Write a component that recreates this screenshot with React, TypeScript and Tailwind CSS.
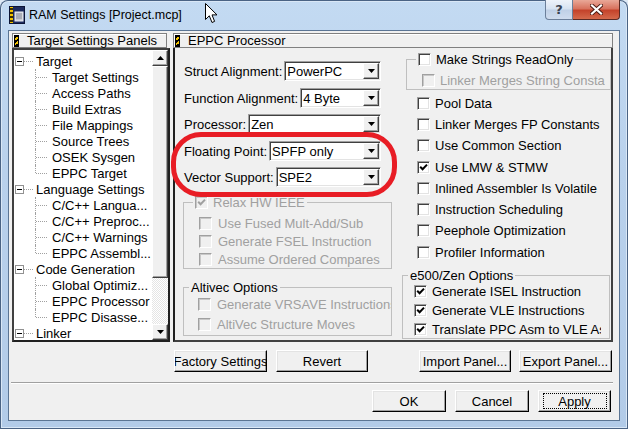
import React from 'react';

const raised =
  'border border-t-white border-l-white border-r-[#404040] border-b-[#404040] shadow-[inset_-1px_-1px_0_#a0a0a0]';
const sunken =
  'border border-t-[#a0a0a0] border-l-[#a0a0a0] border-r-white border-b-white shadow-[inset_1px_1px_0_#404040,inset_-1px_-1px_0_#e3e3e3]';

const Stripe: React.FC = () => (
  <span className="h-[12px] w-[5px] shrink-0 border border-black bg-[repeating-linear-gradient(150deg,#000_0px,#000_2px,#f2c200_2px,#f2c200_4px)]" />
);

const Check: React.FC<{ checked?: boolean; disabled?: boolean }> = ({ checked, disabled }) => (
  <span
    className={`flex h-[13px] w-[13px] shrink-0 items-center justify-center ${
      disabled
        ? 'border border-t-[#a0a0a0] border-l-[#a0a0a0] border-r-white border-b-white bg-[#f0f0f0] shadow-[inset_1px_1px_0_#c8c8c8]'
        : `${sunken} bg-white`
    }`}
  >
    {checked && (
      <svg width="9" height="9" viewBox="0 0 9 9">
        <path d="M1.2 3.8 L3.6 6.3 L8 1.6" fill="none" stroke={disabled ? '#a0a0a0' : '#000'} strokeWidth="2" />
      </svg>
    )}
  </span>
);

const CheckRow: React.FC<{
  label: string;
  checked?: boolean;
  disabled?: boolean;
  pl: string;
  h: string;
  gap?: string;
}> = ({ label, checked, disabled, pl, h, gap = 'gap-[5px]' }) => (
  <div className={`flex ${h} ${pl} ${gap} items-center overflow-hidden whitespace-nowrap`}>
    <Check checked={checked} disabled={disabled} />
    <span className={disabled ? 'text-[#a0a0a0]' : 'text-black'}>{label}</span>
  </div>
);

const Select: React.FC<{ value: string }> = ({ value }) => (
  <div className={`flex h-[20px] min-w-0 flex-1 items-center bg-white p-[1px] ${sunken}`}>
    <span className="min-w-0 flex-1 truncate pl-[1px]">{value}</span>
    <span className={`flex h-[16px] w-[16px] shrink-0 items-center justify-center bg-[#f0f0f0] ${raised}`}>
      <svg width="7" height="4" viewBox="0 0 7 4">
        <path d="M0 0h7L3.5 4z" fill="#000" />
      </svg>
    </span>
  </div>
);

const SelectRow: React.FC<{ label: string; value: string; mt: string }> = ({ label, value, mt }) => (
  <div className={`flex h-[20px] items-center gap-[2px] pl-[1px] pr-[11px] ${mt}`}>
    <span className="whitespace-nowrap">{label}</span>
    <Select value={value} />
  </div>
);

const Btn: React.FC<{ label: string; w: string; ml: string; focus?: boolean }> = ({ label, w, ml, focus }) => (
  <div
    className={`flex h-[22px] ${w} ${ml} shrink-0 items-center justify-center overflow-hidden whitespace-nowrap bg-[#f0f0f0] border border-t-white border-l-white border-r-black border-b-black shadow-[inset_-1px_-1px_0_#a0a0a0,inset_1px_1px_0_#e3e3e3]`}
  >
    {focus ? (
      <span className="flex h-[16px] w-[64px] items-center justify-center border border-dotted border-black">{label}</span>
    ) : (
      label
    )}
  </div>
);

const tree: [string, number, boolean?][] = [
  ['Target', 0],
  ['Target Settings', 1],
  ['Access Paths', 1],
  ['Build Extras', 1],
  ['File Mappings', 1],
  ['Source Trees', 1],
  ['OSEK Sysgen', 1],
  ['EPPC Target', 1, true],
  ['Language Settings', 0],
  ['C/C++ Langua...', 1],
  ['C/C++ Preproc...', 1],
  ['C/C++ Warnings', 1],
  ['EPPC Assembl...', 1, true],
  ['Code Generation', 0],
  ['Global Optimiz...', 1],
  ['EPPC Processor', 1],
  ['EPPC Disasse...', 1, true],
  ['Linker', 0],
];

const TreeRow: React.FC<{ label: string; depth: number; last?: boolean }> = ({ label, depth, last }) =>
  depth === 0 ? (
    <div className="flex h-[16px] shrink-0 items-center whitespace-nowrap">
      <span className="ml-[1px] flex h-[9px] w-[9px] shrink-0 items-center justify-center border border-[#919191] bg-white">
        <span className="h-px w-[5px] bg-black" />
      </span>
      <span className="w-[9px] shrink-0 border-t border-dotted border-[#a0a0a0]" />
      <span className="ml-[3px]">{label}</span>
    </div>
  ) : (
    <div className="flex h-[16px] shrink-0 items-center whitespace-nowrap">
      <span className="w-[21px] shrink-0" />
      <span
        className={`w-0 shrink-0 border-l border-dotted border-[#a0a0a0] ${last ? 'h-[8px] self-start' : 'self-stretch'}`}
      />
      <span className="w-[11px] shrink-0 border-t border-dotted border-[#a0a0a0]" />
      <span className="ml-[5px]">{label}</span>
    </div>
  );

const AppIcon: React.FC = () => (
  <svg width="16" height="18" viewBox="0 0 16 18">
    <rect x="0.5" y="0.5" width="15" height="17" fill="#1c2b5e" stroke="#0b1436" />
    <rect x="1" y="1" width="3" height="16" fill="#f2c200" />
    <path d="M1 3h3M1 7h3M1 11h3M1 15h3" stroke="#000" strokeWidth="1.5" />
    <rect x="6" y="6" width="8" height="9" fill="#c9ccd4" stroke="#eef0f4" />
    <path d="M7 8h6M7 10h6M7 12h6" stroke="#8a8e99" />
  </svg>
);

const App: React.FC = () => {
  return (
    <div className="relative h-[429px] w-[628px] overflow-hidden bg-[#dfe9f5] font-['Liberation_Sans',Arial,sans-serif] text-[13px] leading-[15px] text-black">
      <div className="flex h-full w-full flex-col rounded-t-[8px] bg-[linear-gradient(180deg,#c3daf2_0%,#b9d1ec_40%,#b2cbe8_100%)] shadow-[inset_0_0_0_1px_#4a6384,inset_0_0_0_2px_#d9e7f6]">
        {/* title bar */}
        <div className="flex h-[30px] shrink-0">
          <div className="ml-[9px] mt-[6px]">
            <AppIcon />
          </div>
          <div className="ml-[4px] mt-[7px] font-['Liberation_Sans',Arial,sans-serif] text-[12.5px] leading-[16px] text-black">
            RAM Settings [Project.mcp]
          </div>
          <div className="mr-[8px] ml-auto flex h-[20px]">
            <div className="flex w-[28px] items-center justify-center rounded-bl-[4px] border border-t-0 border-[#6b7f9a] bg-[linear-gradient(180deg,#eef3fa_0%,#d6e2f1_48%,#bfd0e6_52%,#cfdcee_100%)] font-['DejaVu_Sans',sans-serif] text-[13px] font-bold text-[#3a4250]">
              ?
            </div>
            <div className="flex w-[47px] items-center justify-center rounded-br-[4px] border border-t-0 border-l-0 border-[#5a2a24] bg-[linear-gradient(180deg,#e9a898_0%,#d8735f_45%,#c4432b_55%,#d46a4c_100%)]">
              <svg width="13" height="11" viewBox="0 0 13 11">
                <path d="M2 1.5 L11 9.5 M11 1.5 L2 9.5" stroke="#4a1a12" strokeWidth="4" strokeLinecap="square" />
                <path d="M2 1.5 L11 9.5 M11 1.5 L2 9.5" stroke="#fff" strokeWidth="2.2" strokeLinecap="square" />
              </svg>
            </div>
          </div>
        </div>

        {/* client area */}
        <div className="mx-[8px] h-[391px] shrink-0 border border-[#5b7594] bg-[#f0f0f0]">
          <div className="ml-[3px] mt-[2px] flex h-[309px]">
            {/* left panel */}
            <div className="flex w-[158px] flex-col">
              <div className="flex h-[15px] w-[155px] items-center gap-[8px] border border-[#808080] pl-[1px] shadow-[inset_1px_1px_0_#fff]">
                <Stripe />
                <span className="whitespace-nowrap">Target Settings Panels</span>
              </div>
              <div className="flex h-[294px] border-2 border-t-[#404040] border-l-[#404040] border-r-[#202020] border-b-[#202020] bg-white">
                <div className="flex min-w-0 flex-1 flex-col overflow-hidden pt-[3px]">
                  {tree.map(([l, d, last]) => (
                    <TreeRow key={l} label={l} depth={d} last={last} />
                  ))}
                </div>
                <div className="flex w-[16px] shrink-0 flex-col">
                  <div className={`flex h-[16px] items-center justify-center bg-[#f0f0f0] ${raised}`}>
                    <svg width="7" height="4" viewBox="0 0 7 4">
                      <path d="M3.5 0L7 4H0z" fill="#000" />
                    </svg>
                  </div>
                  <div className={`h-[212px] bg-[#f0f0f0] ${raised}`} />
                  <div className="flex-1 bg-[repeating-conic-gradient(#ffffff_0_25%,#e4e4e4_0_50%)] bg-[length:2px_2px]" />
                  <div className={`flex h-[16px] items-center justify-center bg-[#f0f0f0] ${raised}`}>
                    <svg width="7" height="4" viewBox="0 0 7 4">
                      <path d="M0 0h7L3.5 4z" fill="#000" />
                    </svg>
                  </div>
                </div>
              </div>
            </div>

            {/* center panel */}
            <div className="ml-[3px] flex w-[440px] flex-col">
              <div className="flex h-[15px] items-center gap-[8px] border border-[#808080] pl-[1px] shadow-[inset_1px_1px_0_#fff]">
                <Stripe />
                <span className="whitespace-nowrap">EPPC Processor</span>
              </div>
              <div className="flex h-[294px] border-2 border-t-0 border-l-[#202020] border-r-[#404040] border-b-[#404040]">
                {/* left column */}
                <div className="ml-[8px] flex w-[209px] flex-col pt-[13px]">
                  <SelectRow label="Struct Alignment:" value="PowerPC" mt="mt-0" />
                  <SelectRow label="Function Alignment:" value="4 Byte" mt="mt-[7px]" />
                  <SelectRow label="Processor:" value="Zen" mt="mt-[6px]" />
                  <SelectRow label="Floating Point:" value="SPFP only" mt="mt-[7px]" />
                  <SelectRow label="Vector Support:" value="SPE2" mt="mt-[6px]" />

                  <fieldset className="mt-[8px] min-w-0 border border-[#bfbfbf] pb-0">
                    <legend className="ml-[9px] px-[2px]">
                      <span className="flex items-center gap-[5px] whitespace-nowrap text-[#a0a0a0]">
                        <Check checked disabled />
                        Relax HW IEEE
                      </span>
                    </legend>
                    <div className="flex flex-col pt-[4px]">
                      <CheckRow label="Use Fused Mult-Add/Sub" disabled pl="pl-[15px]" h="h-[18px]" gap="gap-[6px]" />
                      <CheckRow label="Generate FSEL Instruction" disabled pl="pl-[15px]" h="h-[18px]" gap="gap-[6px]" />
                      <CheckRow label="Assume Ordered Compares" disabled pl="pl-[15px]" h="h-[18px]" gap="gap-[6px]" />
                    </div>
                  </fieldset>

                  <fieldset className="mt-[11px] min-w-0 border border-[#bfbfbf] pb-[1px]">
                    <legend className="ml-[5px] px-[2px] whitespace-nowrap">Altivec Options</legend>
                    <div className="-mt-[1px] flex flex-col">
                      <CheckRow label="Generate VRSAVE Instructions" disabled pl="pl-[14px]" h="h-[20px]" gap="gap-[6px]" />
                      <CheckRow label="AltiVec Structure Moves" disabled pl="pl-[14px]" h="h-[20px]" gap="gap-[6px]" />
                    </div>
                  </fieldset>
                </div>

                {/* right column */}
                <div className="ml-[10px] flex w-[209px] flex-col">
                  <fieldset className="ml-[4px] mt-[3.5px] min-w-0 border border-[#bfbfbf]">
                    <legend className="ml-[9px] px-[2px]">
                      <span className="flex items-center gap-[5px] whitespace-nowrap">
                        <Check />
                        Make Strings ReadOnly
                      </span>
                    </legend>
                    <div className="pt-[6px] pr-[5px]">
                      <CheckRow label="Linker Merges String Constants" disabled pl="pl-[15px]" h="h-[16px]" />
                    </div>
                  </fieldset>
                  <div className="mt-[3px] flex flex-col">
                    <CheckRow label="Pool Data" pl="pl-[15px]" h="h-[21.3px]" />
                    <CheckRow label="Linker Merges FP Constants" pl="pl-[15px]" h="h-[21.3px]" />
                    <CheckRow label="Use Common Section" pl="pl-[15px]" h="h-[21.3px]" />
                    <CheckRow label="Use LMW & STMW" checked pl="pl-[15px]" h="h-[21.3px]" />
                    <CheckRow label="Inlined Assembler Is Volatile" pl="pl-[15px]" h="h-[21.3px]" />
                    <CheckRow label="Instruction Scheduling" pl="pl-[15px]" h="h-[21.3px]" />
                    <CheckRow label="Peephole Optimization" pl="pl-[15px]" h="h-[21.3px]" />
                    <CheckRow label="Profiler Information" pl="pl-[15px]" h="h-[21.3px]" />
                  </div>
                  <fieldset className="mt-[5px] w-[208px] min-w-0 border border-[#bfbfbf]">
                    <legend className="ml-[5px] px-[2px] whitespace-nowrap">e500/Zen Options</legend>
                    <div className="flex flex-col gap-[2px] pr-[8px]">
                      <CheckRow label="Generate ISEL Instruction" checked pl="pl-[11px]" h="h-[17px]" />
                      <CheckRow label="Generate VLE Instructions" checked pl="pl-[11px]" h="h-[17px]" />
                      <CheckRow label="Translate PPC Asm to VLE Asm" checked pl="pl-[11px]" h="h-[17px]" />
                    </div>
                  </fieldset>
                </div>
              </div>
            </div>
          </div>

          {/* panel buttons */}
          <div className="mt-[8px] flex">
            <Btn label="Factory Settings" w="w-[93px]" ml="ml-[165px]" />
            <Btn label="Revert" w="w-[92px]" ml="ml-[9px]" />
            <Btn label="Import Panel..." w="w-[92px]" ml="ml-[51px]" />
            <Btn label="Export Panel..." w="w-[93px]" ml="ml-[8px]" />
          </div>

          <div className="ml-[2px] mt-[10px] h-[2px] w-[602px] border-t border-b border-t-[#a0a0a0] border-b-white" />

          <div className="mt-[6px] flex">
            <Btn label="OK" w="w-[74px]" ml="ml-[363px]" />
            <Btn label="Cancel" w="w-[74px]" ml="ml-[9px]" />
            <Btn label="Apply" w="w-[73px]" ml="ml-[9px]" focus />
          </div>
        </div>
      </div>

      {/* red annotation */}
      <div className="pointer-events-none absolute left-[171px] top-[132px] h-[65px] w-[226px] rounded-[30px] border-[5px] border-[#e81d25]" />

      {/* mouse cursor */}
      <svg className="absolute left-[205px] top-[3px]" width="13" height="21" viewBox="0 0 13 21">
        <path
          d="M0.5 0.5 L0.5 16.5 L4.3 12.8 L7 19.5 L9.6 18.4 L7 11.9 L12 11.9 Z"
          fill="#fff"
          stroke="#000"
          strokeWidth="1"
          strokeLinejoin="miter"
        />
      </svg>
    </div>
  );
};

export default App;
